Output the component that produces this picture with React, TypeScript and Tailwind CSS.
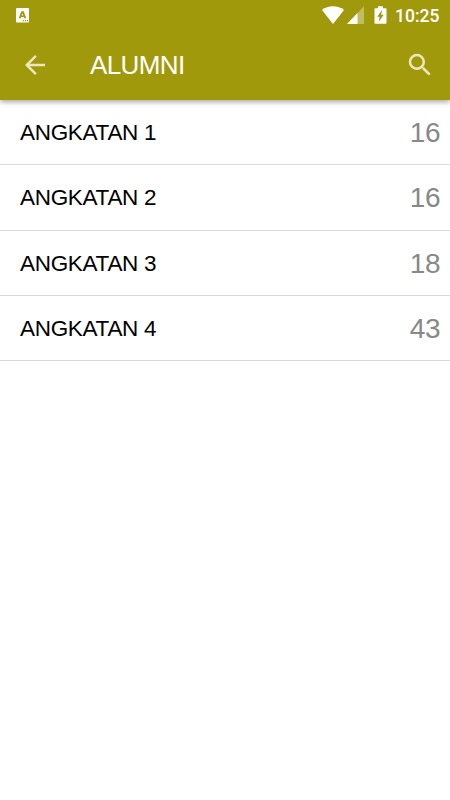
const groups = [
  { name: "ANGKATAN 1", count: 16 },
  { name: "ANGKATAN 2", count: 16 },
  { name: "ANGKATAN 3", count: 18 },
  { name: "ANGKATAN 4", count: 43 },
];

function StatusBar() {
  return (
    <div className="flex h-[30px] items-center pr-[10px] pl-4 text-white">
      <svg className="h-[15px] w-[13px]" viewBox="0 0 13 15" aria-hidden="true">
        <rect width="13" height="14.6" rx="0.8" fill="currentColor" />
        <path
          fillRule="evenodd"
          d="M5.300 3.300h2.400L10.200 10.300H8.100L7.700 9H5.300L4.900 10.300H2.800zM6.500 5.300 5.800 7.500H7.200z"
          fill="#a1990c"
        />
        <path d="M7 12h1.1v1.200H7zM9 12h1.1v1.200H9zM11 12h1.1v1.200H11z" fill="#a1990c" />
      </svg>
      <div className="ml-auto flex items-center">
        <svg className="h-[18px] w-[22px]" viewBox="0 0 22 18" fill="currentColor" aria-hidden="true">
          <path d="M0 4C3 1.500 7 .3 11 .3s8 1.200 11 3.700L11 18z" />
        </svg>
        <svg className="ml-[3px] h-[18px] w-[17px]" viewBox="0 0 17 18" fill="currentColor" aria-hidden="true">
          <path d="M17 .3V18H0z" opacity="0.35" />
          <path d="M10.500 7v11H0z" />
        </svg>
        <svg className="ml-[10px] h-[18px] w-[13px]" viewBox="0 0 13 18" fill="currentColor" aria-hidden="true">
          <path d="M4 .2h5v2h2.700c.5 0 .8.3.8.8v14c0 .5-.3.8-.8.8H1.300c-.5 0-.8-.3-.8-.8V3c0-.5.3-.8.8-.8H4z" />
          <path d="M8 4 3.200 10.700h2.400L4.800 15.800 9.800 8.700H7.200z" fill="#a1990c" />
        </svg>
        <span className="ml-2 w-[45px] translate-y-[1px] font-[Roboto,sans-serif] text-[17.500px] leading-5 font-medium whitespace-nowrap">
          10:25
        </span>
      </div>
    </div>
  );
}

export default function App() {
  return (
    <div className="min-h-screen w-full bg-white font-['Liberation_Sans',Arial,sans-serif]">
      <header className="relative h-[100px] bg-[#a1990c] shadow-[0_2px_5px_rgba(0,0,0,0.35)]">
        <StatusBar />
        <div className="flex h-[70px] items-center pr-[15px] pl-[20px]">
          <button className="text-[#ece8bc]" aria-label="Back">
            <svg className="size-[30px]" viewBox="0 0 24 24" fill="currentColor">
              <path d="M20 11H7.830l5.590-5.590L12 4l-8 8 8 8 1.410-1.410L7.830 13H20z" />
            </svg>
          </button>
          <h1 className="ml-10 text-[26px] leading-8 tracking-[-0.600px] text-white">ALUMNI</h1>
          <button className="ml-auto text-[#ece8bc]" aria-label="Search">
            <svg className="size-[30px]" viewBox="0 0 24 24" fill="currentColor">
              <path d="M15.500 14h-.79l-.28-.27A6.470 6.470 0 0 0 16 9.500 6.500 6.500 0 1 0 9.500 16c1.610 0 3.090-.59 4.230-1.570l.27.28v.79l5 4.990L20.490 19zm-6 0a4.500 4.500 0 1 1 0-9 4.500 4.500 0 0 1 0 9" />
            </svg>
          </button>
        </div>
      </header>
      <ul>
        {groups.map((group) => (
          <li
            key={group.name}
            className="flex h-[65.250px] items-center justify-between border-b border-[#d9d9d9] pt-[2px] pr-[10px] pl-5"
          >
            <span className="text-[22.500px] leading-7 tracking-[-0.300px] text-black">{group.name}</span>
            <span className="text-[28px] leading-8 tracking-[-0.500px] text-[#888888]">{group.count}</span>
          </li>
        ))}
      </ul>
    </div>
  );
}
